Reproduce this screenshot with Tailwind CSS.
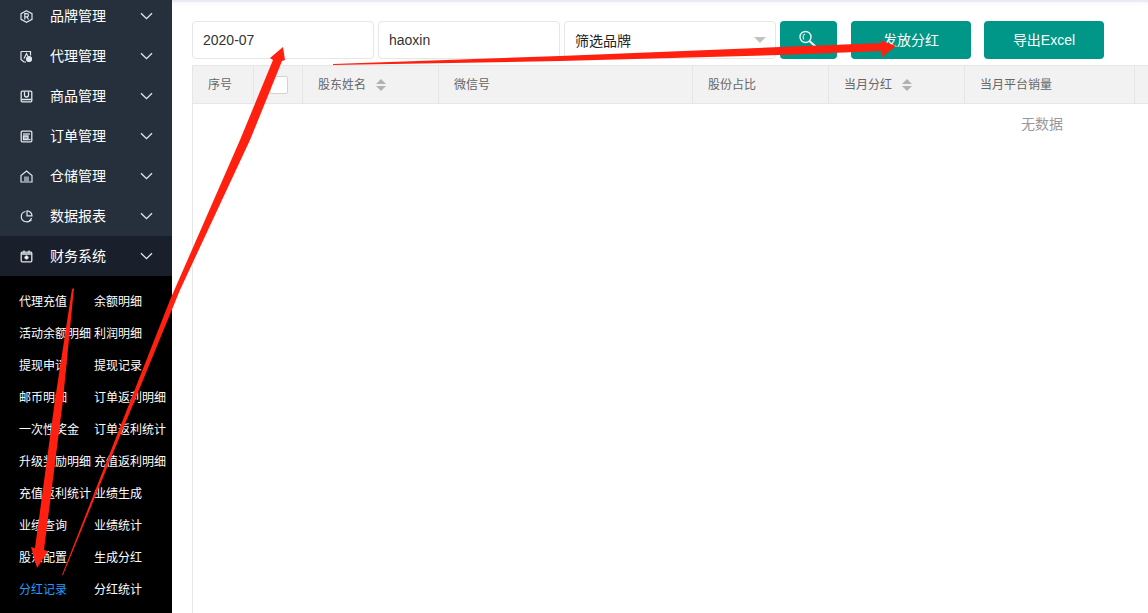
<!DOCTYPE html>
<html lang="zh">
<head>
<meta charset="utf-8">
<script src="https://cdn.jsdelivr.net/npm/@tailwindcss/browser@4"></script>
</head>
<body class="m-0 overflow-hidden bg-white">
<div class="relative flex h-[613px] w-[1148px] overflow-hidden font-['Liberation_Sans','Noto_Sans_CJK_SC',sans-serif]">
  <aside class="flex h-full w-[172px] shrink-0 flex-col overflow-hidden bg-black text-white">
    <nav class="-mt-1 flex flex-col bg-[#25303c] text-sm">
      <div class="flex h-10 items-center pl-[20px] pr-[19px]">
        <svg class="mr-[17px] h-[13px] w-[13px] shrink-0" viewBox="0 0 13 13" fill="none" stroke="#dfe6ec" stroke-width="1.2"><path d="M6.500 .7 12 3.600v5.800l-5.500 2.900L1 9.400V3.600z"/><path d="M4.800 9.500V3.700h2a1.600 1.600 0 0 1 0 3.200h-2M7 7l1.500 2.500"/></svg>
        <span class="flex-1">品牌管理</span>
        <svg class="h-[8px] w-[13px]" viewBox="0 0 13 8" fill="none" stroke="#e5eaef" stroke-width="1.300"><path d="m1 1.200 5.500 5.500L12 1.200"/></svg>
      </div>
      <div class="flex h-10 items-center pl-[20px] pr-[19px]">
        <svg class="mr-[17px] h-[13px] w-[13px] shrink-0" viewBox="0 0 13 13" fill="none" stroke="#dfe6ec" stroke-width="1.200"><path d="M1 1.500h9.500v4M1 1.500v8l3 2.500h2"/><path d="M4 8.500 6.500 3.500 8 6.500"/><circle cx="9" cy="9" r="2.500" fill="#dfe6ec"/></svg>
        <span class="flex-1">代理管理</span>
        <svg class="h-[8px] w-[13px]" viewBox="0 0 13 8" fill="none" stroke="#e5eaef" stroke-width="1.300"><path d="m1 1.200 5.500 5.500L12 1.200"/></svg>
      </div>
      <div class="flex h-10 items-center pl-[20px] pr-[19px]">
        <svg class="mr-[17px] h-[13px] w-[13px] shrink-0" viewBox="0 0 13 13" fill="none" stroke="#dfe6ec" stroke-width="1.300"><rect x="1.200" y="1.200" width="10.600" height="10.600" rx="1"/><path d="M4.500 1.500v3.500a2 2 0 0 0 4 0V1.500M1.500 9.500h10"/></svg>
        <span class="flex-1">商品管理</span>
        <svg class="h-[8px] w-[13px]" viewBox="0 0 13 8" fill="none" stroke="#e5eaef" stroke-width="1.300"><path d="m1 1.200 5.500 5.500L12 1.200"/></svg>
      </div>
      <div class="flex h-10 items-center pl-[20px] pr-[19px]">
        <svg class="mr-[17px] h-[13px] w-[13px] shrink-0" viewBox="0 0 13 13" fill="none" stroke="#dfe6ec" stroke-width="1.300"><rect x="1.200" y="1.200" width="10.600" height="10.600" rx="1"/><path d="M3 4h7"/><path d="M3.500 6h4.500v3.500h-4.500z" fill="#8d98a3"/><path d="M8.500 9.500h2"/></svg>
        <span class="flex-1">订单管理</span>
        <svg class="h-[8px] w-[13px]" viewBox="0 0 13 8" fill="none" stroke="#e5eaef" stroke-width="1.300"><path d="m1 1.200 5.500 5.500L12 1.200"/></svg>
      </div>
      <div class="flex h-10 items-center pl-[20px] pr-[19px]">
        <svg class="mr-[17px] h-[13px] w-[13px] shrink-0" viewBox="0 0 13 13" fill="none" stroke="#dfe6ec" stroke-width="1.200"><path d="M6.500 1 12 5.500v6.500H1V5.500z"/><rect x="4" y="6.500" width="5" height="5.500" fill="#8d98a3" stroke="none"/></svg>
        <span class="flex-1">仓储管理</span>
        <svg class="h-[8px] w-[13px]" viewBox="0 0 13 8" fill="none" stroke="#e5eaef" stroke-width="1.300"><path d="m1 1.200 5.500 5.500L12 1.200"/></svg>
      </div>
      <div class="flex h-10 items-center pl-[20px] pr-[19px]">
        <svg class="mr-[17px] h-[13px] w-[13px] shrink-0" viewBox="0 0 13 13" fill="none" stroke="#dfe6ec" stroke-width="1.200"><path d="M5.500 1.500a5.200 5.200 0 1 0 6 6.500"/><path d="M7 .8a5 5 0 0 1 5 5H7z"/><path d="M9 10.500h2.500"/></svg>
        <span class="flex-1">数据报表</span>
        <svg class="h-[8px] w-[13px]" viewBox="0 0 13 8" fill="none" stroke="#e5eaef" stroke-width="1.300"><path d="m1 1.200 5.500 5.500L12 1.200"/></svg>
      </div>
      <div class="flex h-10 items-center bg-[#19202b] pl-[20px] pr-[19px]">
        <svg class="mr-[17px] h-[13px] w-[13px] shrink-0" viewBox="0 0 13 13" fill="none" stroke="#dfe6ec" stroke-width="1.300"><rect x="1.200" y="2.200" width="10.600" height="9.600" rx="1"/><path d="M4 .5v2.500M9 .5v2.500M1.500 4h10"/><path d="M4.500 7.500h4M6.500 5.500v4" stroke-width="1.800" stroke="#fff"/></svg>
        <span class="flex-1">财务系统</span>
        <svg class="h-[8px] w-[13px]" viewBox="0 0 13 8" fill="none" stroke="#e5eaef" stroke-width="1.300"><path d="m1 1.200 5.500 5.500L12 1.200"/></svg>
      </div>
    </nav>
    <div class="grid grid-cols-[75px_78px] auto-rows-[32px] items-center whitespace-nowrap pl-[19px] pt-[10px] text-xs">
      <span>代理充值</span><span>余额明细</span>
      <span>活动余额明细</span><span>利润明细</span>
      <span>提现申请</span><span>提现记录</span>
      <span>邮币明细</span><span>订单返利明细</span>
      <span>一次性奖金</span><span>订单返利统计</span>
      <span>升级奖励明细</span><span>充值返利明细</span>
      <span>充值返利统计</span><span>业绩生成</span>
      <span>业绩查询</span><span>业绩统计</span>
      <span>股东配置</span><span>生成分红</span>
      <span class="text-[#1e9fff]">分红记录</span><span>分红统计</span>
    </div>
  </aside>

  <main class="flex min-w-0 flex-1 flex-col">
    <div class="h-[2px] shrink-0 bg-[#e9ebf3]"></div>
    <div class="h-[4px] shrink-0 bg-gradient-to-b from-[#f7f8fc] to-white"></div>
    <div class="mt-[15px] flex h-[38px] shrink-0 pl-5 text-sm">
      <div class="flex w-[182px] items-center rounded-sm border border-[#e6e6e6] pl-[10px] text-[#333]">2020-07</div>
      <div class="ml-1 flex w-[182px] items-center rounded-sm border border-[#e6e6e6] pl-[10px] text-[#333]">haoxin</div>
      <div class="relative ml-1 flex w-[212px] items-center rounded-sm border border-[#e6e6e6] pl-[10px] pt-[2px] text-[#222]">
        筛选品牌
        <span class="absolute right-[9px] top-[15px] h-0 w-0 border-x-[6px] border-t-[6px] border-x-transparent border-t-[#c2c2c2]"></span>
      </div>
      <button class="ml-1 flex w-[57px] items-center justify-center rounded-sm bg-[#009688]">
        <svg class="mb-[1px] h-[19px] w-[19px]" viewBox="0 0 19 19" fill="none" stroke="#eaf6f4"><circle cx="6.500" cy="7" r="5.500" stroke-width="1.400"/><path d="M10.500 11 16.500 16.500" stroke-width="2.200"/><path d="M6 4a3.500 3.500 0 0 0-1 5.500" stroke-width="1.100"/></svg>
      </button>
      <button class="ml-[14px] w-[120px] rounded-sm bg-[#009688] text-white">发放分红</button>
      <button class="ml-[13px] w-[120px] rounded-sm bg-[#009688] text-white">导出Excel</button>
    </div>
    <div class="ml-5 mt-[6px] flex min-h-0 flex-1 flex-col border-l border-[#e6e6e6] text-xs text-[#666]">
      <div class="flex h-[39px] shrink-0 border-y border-[#e6e6e6] bg-[#f2f2f2]">
        <div class="flex w-[61px] items-center border-r border-[#e6e6e6] pl-[15px]">序号</div>
        <div class="flex w-[49px] items-center justify-center border-r border-[#e6e6e6]"><span class="ml-[1px] h-[18px] w-[18px] rounded-[2px] border border-[#d2d2d2] bg-white"></span></div>
        <div class="flex w-[136px] items-center border-r border-[#e6e6e6] pl-[15px]">股东姓名
          <span class="ml-[10px] flex flex-col gap-[2px]"><i class="block h-0 w-0 border-x-[5px] border-b-[5px] border-x-transparent border-b-[#b2b2b2]"></i><i class="block h-0 w-0 border-x-[5px] border-t-[5px] border-x-transparent border-t-[#b2b2b2]"></i></span>
        </div>
        <div class="flex w-[254px] items-center border-r border-[#e6e6e6] pl-[15px]">微信号</div>
        <div class="flex w-[136px] items-center border-r border-[#e6e6e6] pl-[15px]">股份占比</div>
        <div class="flex w-[136px] items-center border-r border-[#e6e6e6] pl-[15px]">当月分红
          <span class="ml-[10px] flex flex-col gap-[2px]"><i class="block h-0 w-0 border-x-[5px] border-b-[5px] border-x-transparent border-b-[#b2b2b2]"></i><i class="block h-0 w-0 border-x-[5px] border-t-[5px] border-x-transparent border-t-[#b2b2b2]"></i></span>
        </div>
        <div class="flex w-[170px] items-center border-r border-[#e6e6e6] pl-[15px]">当月平台销量</div>
      </div>
      <div class="pl-[828px] pt-[10px] text-sm leading-[20px] text-[#999]">无数据</div>
    </div>
  </main>

  <svg class="pointer-events-none absolute left-0 top-0" width="1148" height="613" viewBox="0 0 1148 613">
    <polygon fill="#ff2010" points="74,288 72,289 55,400 35,548 31,547 37,568 48,551 44,550 63,400"/>
    <polygon fill="#ff2010" points="62,575 63,575 180,290 250,140 282,61 285,60 283,47 270,58 273,60 240,140 170,300"/>
    <polygon fill="#ff2010" points="333,64 333,65 560,61 780,55 882,51 882,57 896,46 880,40 882,43 780,47 560,56"/>
  </svg>
</div>
</body>
</html>
